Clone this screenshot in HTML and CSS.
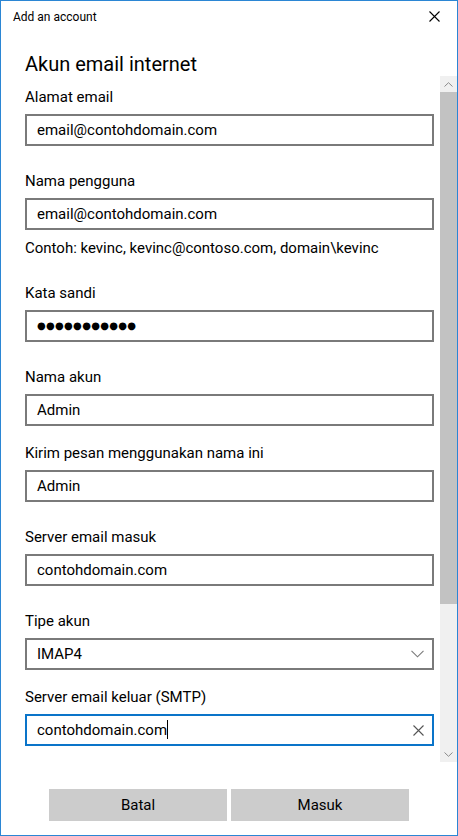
FILE: index.html
```html
<!DOCTYPE html>
<html lang="id">
<head>
<meta charset="utf-8">
<title>Add an account</title>
<link rel="stylesheet" href="styles.css">
</head>
<body>
<div class="window">
  <header class="titlebar">
    <span class="title">Add an account</span>
    <svg class="close" width="11" height="11" viewBox="0 0 11 11"><path d="M0.5 0.5L10.5 10.5M10.5 0.5L0.5 10.5" stroke="#000" stroke-width="1.1" fill="none"/></svg>
  </header>
  <h1 class="heading">Akun email internet</h1>
  <div class="scroll-area">
    <div class="form">
      <div class="field">
        <div class="label">Alamat email</div>
        <div class="textbox">email@contohdomain.com</div>
      </div>
      <div class="field">
        <div class="label">Nama pengguna</div>
        <div class="textbox">email@contohdomain.com</div>
        <div class="hint">Contoh: kevinc, kevinc@contoso.com, domain\kevinc</div>
      </div>
      <div class="field">
        <div class="label">Kata sandi</div>
        <div class="textbox password">●●●●●●●●●●●</div>
      </div>
      <div class="field">
        <div class="label">Nama akun</div>
        <div class="textbox">Admin</div>
      </div>
      <div class="field field-tight">
        <div class="label">Kirim pesan menggunakan nama ini</div>
        <div class="textbox">Admin</div>
      </div>
      <div class="field">
        <div class="label">Server email masuk</div>
        <div class="textbox">contohdomain.com</div>
      </div>
      <div class="field">
        <div class="label">Tipe akun</div>
        <div class="textbox select">
          <span>IMAP4</span>
          <svg class="chev" width="13" height="8" viewBox="0 0 13 8"><path d="M0.5 0.8L6.5 6.8L12.5 0.8" stroke="#7a7a7a" stroke-width="1.1" fill="none"/></svg>
        </div>
      </div>
      <div class="field field-tight">
        <div class="label">Server email keluar (SMTP)</div>
        <div class="textbox focused">
          <span>contohdomain.com<span class="caret"></span></span>
          <svg class="clear" width="11" height="11" viewBox="0 0 11 11"><path d="M0.5 0.5L10.5 10.5M10.5 0.5L0.5 10.5" stroke="#555" stroke-width="1.1" fill="none"/></svg>
        </div>
      </div>
    </div>
    <div class="scrollbar">
      <div class="sb-btn"><svg width="9" height="5" viewBox="0 0 9 5"><path d="M0.5 4.5L4.5 0.7L8.5 4.5" stroke="#8a8a8a" stroke-width="1" fill="none"/></svg></div>
      <div class="sb-track"><div class="sb-thumb"></div></div>
      <div class="sb-btn"><svg width="9" height="5" viewBox="0 0 9 5"><path d="M0.5 0.5L4.5 4.3L8.5 0.5" stroke="#8a8a8a" stroke-width="1" fill="none"/></svg></div>
    </div>
  </div>
  <footer class="footer">
    <button class="btn">Batal</button>
    <button class="btn">Masuk</button>
  </footer>
</div>
</body>
</html>
```

FILE: styles.css
```css
* { box-sizing: border-box; }
html, body { margin: 0; padding: 0; background: #fff; }
body {
  font-family: Roboto, "Noto Sans", "Liberation Sans", sans-serif;
  color: #000;
}
.window {
  width: 458px;
  height: 836px;
  border: 1px solid #2b86d4;
  display: flex;
  flex-direction: column;
  background: #fff;
  overflow: hidden;
}
.titlebar {
  height: 31px;
  flex: none;
  display: flex;
  align-items: center;
  justify-content: space-between;
  padding: 0 17px 0 12px;
}
.title { font-size: 12px; line-height: 16px; color: #000; }
.close { display: block; }
.heading {
  flex: none;
  height: 44px;
  margin: 0;
  padding: 20px 0 0 24px;
  font-size: 20px;
  font-weight: 400;
  line-height: 24px;
}
.scroll-area {
  flex: none;
  height: 686px;
  display: flex;
}
.form {
  flex: 1;
  padding: 11px 6px 0 24px;
  overflow: hidden;
}
.field { margin-top: 25px; }
.field:first-child { margin-top: 0; }
.field-tight { margin-top: 17px; }
.label { font-size: 15px; line-height: 20px; }
.textbox {
  margin-top: 7px;
  height: 32px;
  border: 2px solid #7a7a7a;
  padding: 0 8px 0 10px;
  font-size: 15px;
  line-height: 28px;
  display: flex;
  align-items: center;
  justify-content: space-between;
  white-space: nowrap;
}
.textbox.password { font-size: 10px; letter-spacing: 0.3px; font-family: "DejaVu Sans", sans-serif; }
.textbox.focused { border-color: #0a74c9; }
.caret {
  display: inline-block;
  width: 1px;
  height: 19px;
  background: #000;
  vertical-align: -4px;
}
.chev, .clear { display: block; flex: none; }
.hint { margin-top: 8px; font-size: 15px; line-height: 20px; }
.scrollbar {
  flex: none;
  width: 17px;
  display: flex;
  flex-direction: column;
  background: #f0f0f0;
}
.sb-btn {
  height: 16px;
  flex: none;
  display: flex;
  align-items: center;
  justify-content: center;
}
.sb-btn svg { display: block; }
.sb-track { flex: 1; }
.sb-thumb { height: 512px; background: #c2c2c2; }
.footer {
  flex: 1;
  display: flex;
  justify-content: center;
  gap: 4px;
  padding-top: 27px;
}
.btn {
  width: 178px;
  height: 32px;
  border: none;
  background: #cccccc;
  font-family: inherit;
  font-size: 15px;
  color: #000;
  padding: 0;
}
```
